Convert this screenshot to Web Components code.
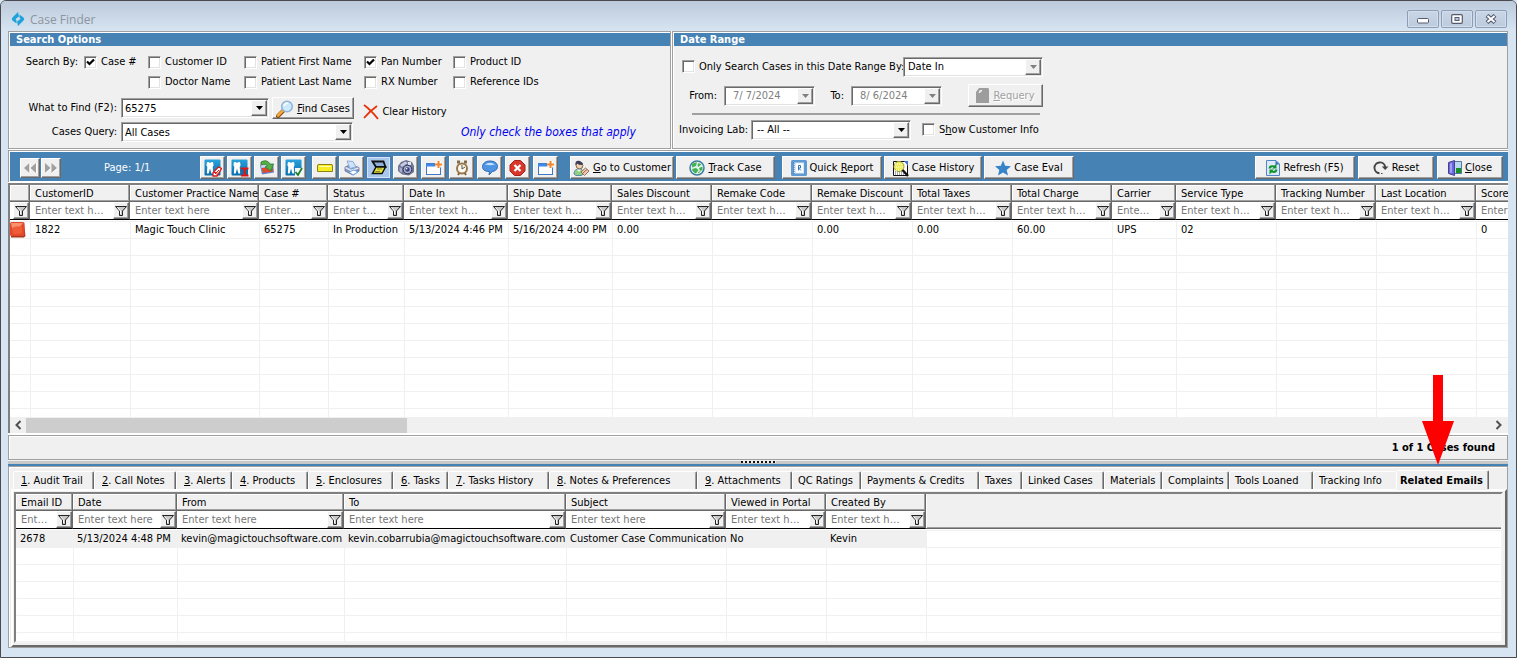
<!DOCTYPE html>
<html lang="en">
<head>
<meta charset="utf-8">
<title>Case Finder</title>
<style>
body{margin:0;font:11px/14px "DejaVu Sans Condensed","Noto Sans",sans-serif;color:#000;background:#d7e4f2}
</style>
</head>
<body>
<case-finder></case-finder>
<script>
const ICONS = {
logo:[14,14,'<path d="M7 0 1.500 5.500Q0 7 1.500 8.500L5.500 11.500V8.500L4.500 7 8 4.500ZM7 14 12.500 8.500Q14 7 12.500 5.500L8.500 2.500V5.500L9.500 7 6 9.500Z" fill="#1ea2dc"/>'],
find:[18,18,'<path d="M7 11 2 16" stroke="#8a4b12" stroke-width="4" stroke-linecap="round"/><path d="M7 10.500 2 15.500" stroke="#f5a93c" stroke-width="2.500" stroke-linecap="round"/><circle cx="11" cy="6.500" r="5.300" fill="#cdeafc" stroke="#8fb4d8" stroke-width="1.500"/><path d="M8 6a3 3 0 0 1 4-2.500" stroke="#fff" stroke-width="1.500" fill="none"/>'],
cross:[16,16,'<path d="M1 1Q8 6 15 15M14 2Q7 7 1 14" stroke="#e63206" stroke-width="1.800" fill="none"/>'],
funnel:[12,12,'<path d="M1 1.500H11L7.500 6V10H4.500V6Z" fill="#fff"/><path d="M.5 1.500H11.500L7.500 6V10.500H4.500V6Z" fill="#c8c8c8" stroke="#222"/><path d="M2.500 2.500 5.500 6V9" stroke="#fff" fill="none"/>'],
back:[14,12,'<path d="M6.500 1V11L1 6ZM13 1V11L7.500 6Z" fill="#a0a0a0"/><path d="M7 1V11M13.500 1V11" stroke="#fff"/>'],
fwd:[14,12,'<path d="M1 1V11L6.500 6ZM7.500 1V11L13 6Z" fill="#a0a0a0"/><path d="M1 11.500 7 6.500M7.500 11.500 13.500 6.500" stroke="#fff"/>'],
tooth:[18,18,'<defs><linearGradient id="g" x2="0" y2="1"><stop stop-color="#2aa3dc"/><stop offset="1" stop-color="#076cab"/></linearGradient></defs><rect x=".5" y=".5" width="16" height="16" rx="1" fill="url(#g)"/><path d="M3 3.200Q4.800 2.800 6 4Q7.300 2.800 9 3.200Q10.200 5.500 8.700 8L9.300 14.500H7.400L6 9.500 4.700 14.500H2.800L3.300 8Q1.800 5.500 3 3.200Z" fill="#fff"/>'],
pen:[18,18,'<path d="M2 6 4 15.500 16 13.500 15 4Z" fill="#5f87cf"/><path d="M3.500 8 5 14 15 12.500V10Z" fill="#e5472c"/><path d="M2.500 5.500 15 4 15.500 7 3.500 9Z" fill="#c5d6f3"/><path d="M3 3Q9-.5 12.500 5.500L15.500 5 13 12 7 8 9.500 7Q8 4 3 6Z" fill="#57b046" stroke="#2d7a26" stroke-width=".8"/>'],
yellow:[18,16,'<path d="M2 4.500H16L16.500 6V11.500H1.500V6Z" fill="#f8ec22" stroke="#8c8410"/><path d="M3 6.500H15" stroke="#fffcb8"/>'],
printer:[18,16,'<path d="M2 7 8 4.500 16 7.500V11L10 15 2 11Z" fill="#8496bd" stroke="#5f719a" stroke-width=".8"/><path d="M4 1 10 1.500 13 7 7 8.500Z" fill="#cfe2fb" stroke="#8badd9"/><path d="M2.500 7.500 8 10.500 15.500 8" stroke="#dbe4f5" stroke-width="1.500"/><path d="M6 12 11 10 15 12 10 15Z" fill="#fff" stroke="#4d94dd" stroke-width=".8"/>'],
scan:[18,18,'<path d="M2.500 2.500H13.500L15.500 8H6Z" fill="#8fb0dd" stroke="#111" stroke-width="1.800"/><path d="M15.500 8 12 14.500H2.500L6 8Z" fill="#e6e63c" stroke="#111" stroke-width="1.500"/><path d="M7 10H12M5.500 12.500H10" stroke="#85852c"/>'],
camera:[18,18,'<path d="M1 7 4 3 9 1 15 3 17 7V13L12 16.500 5 15.500 1 12Z" fill="#6d7594"/><path d="M3 6 8 2.500 11 4 5 8Z" fill="#c9cce0"/><path d="M11 3H14V6H11Z" fill="#e3e5ef"/><path d="M2.500 8 5 9.500V14L2.500 12Z" fill="#a8aecb"/><circle cx="10.500" cy="10.500" r="4.300" fill="#a9aecb" stroke="#2f365c"/><circle cx="10.500" cy="10.500" r="2.200" fill="#3a3f85"/><circle cx="9.700" cy="9.700" r=".8" fill="#fff"/>'],
win:[18,16,'<rect x="1.500" y="3.500" width="14" height="11" fill="#fff" stroke="#3e78c1"/><path d="M1 5H16" stroke="#3e8ae8" stroke-width="3"/><path d="M13.500 1V8M10 4.500H17" stroke="#fff" stroke-width="4"/><path d="M13.500 1V8M10 4.500H17" stroke="#f28524" stroke-width="2"/>'],
clock:[16,16,'<path d="M3 2H6M10 2H13" stroke="#806c49" stroke-width="3"/><path d="M4 15 6 12M12 15 10 12" stroke="#775f37" stroke-width="2"/><circle cx="8" cy="8.500" r="5" fill="#fffaf0" stroke="#987848" stroke-width="2"/><path d="M8 5V9L11 7" fill="none" stroke="#555"/>'],
chat:[18,16,'<path d="M9 1C13 1 16.500 3 16.500 6.500S13 11.500 11.500 11.500L8 15 8.500 11.500C3 11.500 1.500 9 1.500 6.500S4 1 9 1Z" fill="#4e94e2" stroke="#2f69b5"/><path d="M4 4.500Q9 1 14 4.500Q9 6 4 4.500Z" fill="#c3e2ff"/>'],
stop:[18,16,'<path d="M5.500.5H11.500L16 5V11L11.500 15.500H5.500L1 11V5Z" fill="#d8372b" stroke="#a82018"/><path d="M5.500 5 11.500 11M11.500 5 5.500 11" stroke="#fff" stroke-width="2.200"/>'],
person:[17,17,'<path d="M1 14Q1 9 6 9T11 14L8 15.500H3Z" fill="#8ed07f" stroke="#5a86a8"/><path d="M4 9.500 6 12 8 9.500" fill="#fff"/><circle cx="6.500" cy="5.500" r="3.400" fill="#f2cfa6" stroke="#5c4a42" stroke-width=".8"/><path d="M2.500 5.500Q1.500 0 7 1L9.500 3V5Q5.500 5 4 3.500Z" fill="#3c3b5a"/><path d="M8 12 12.500 8 16 11 11.500 15.500Z" fill="#ead3b2" stroke="#8f6f59"/><path d="M10 13 14 9.500" stroke="#bd5237"/>'],
globe:[16,16,'<circle cx="8" cy="8" r="7" fill="#e4f3ee" stroke="#3c7d9d" stroke-width="1.500"/><path d="M3 4Q5.500 2 8 2.500L7 6 3 7.500ZM9.500 3 12.500 4.500 9 7 8.500 5ZM10 8 13.500 6.500V10L11 11ZM3 9 7 8 9.500 10 7 13.500Q3.500 12 3 9ZM9 12 12 11 9.500 13.500Z" fill="#43b254"/>'],
report:[16,16,'<rect width="16" height="16" rx="1.500" fill="#5f9ad3"/><path d="M3 2.500H13V13.500H3Z" fill="#d8e8f7"/><path d="M3 3V14" stroke="#3c78b4" stroke-dasharray="1 1"/><path d="M5 3.500H12V12.500H5Z" fill="#fff"/><path d="M7.500 10.500V5.500H9.500V8H7.500L10 10.500" fill="none" stroke="#3877b7"/>'],
history:[17,17,'<path d="M1.500 1.500H15.500V15.500H1.500Z" fill="#fff" stroke="#111"/><path d="M3 12H10M3 14H12" stroke="#555" stroke-dasharray="1 1"/><circle cx="7" cy="6.500" r="5" fill="#eded56" stroke="#9c9b30"/><path d="M3 4H11M2 7H12M4 10H10" stroke="#fff" stroke-dasharray="1 1"/><path d="M10.500 10 16 16" stroke="#111" stroke-width="2.500"/><path d="M12 1H16V6Z" fill="#3c78c8"/>'],
star:[16,16,'<path d="M8 .5 10.200 5.800 16 6.300 11.700 10 13 15.500 8 12.500 3 15.500 4.300 10 0 6.300 5.800 5.800Z" fill="#3584c9"/>'],
refresh:[14,16,'<path d="M.5.5H10L13.500 4V15.500H.5Z" fill="#dce9fa" stroke="#5284c8"/><path d="M9.500.5V4.500H13.500Z" fill="#396fba"/><path d="M2.500 8.500Q3 4 8.500 5.500L10.500 3.500V8.500H6L7.500 7Q5 6.500 5 8.500Z" fill="#14922d"/><path d="M11.500 9.500Q11 14 5.500 12.500L3.500 14.500V9.500H8L6.500 11Q9 11.500 9 9.500Z" fill="#14922d"/>'],
reset:[16,14,'<path d="M6.500 12.200A5.400 5.400 0 1 1 12.200 6" fill="none" stroke="#454545" stroke-width="1.900"/><path d="M8 12.500H9.500" stroke="#454545"/><path d="M8.800 5.500H15.500L12.200 9Z" fill="#454545"/>'],
door:[14,16,'<path d="M6.500 1.500H13.500V13.500H6.500Z" fill="#b7d8ee" stroke="#54779e"/><path d="M8 8H13V13H8Z" fill="#168f26"/><path d="M.5 2.500 6.500.5V15.500L.5 13.500Z" fill="#6b65d6" stroke="#4640a0"/><path d="M2 3.500 4 3V13L2 12.500Z" fill="#a39ff1"/>'],
doc:[14,16,'<path d="M3 0H12Q13 0 13 2V15H0V4Z" fill="#9d9d9d"/><path d="M3.500 5Q3.500 2.500 6 2.500" fill="none" stroke="#f0f0f0" stroke-width="1.500"/>'],
cube:[16,16,'<path d="M1 1H14L15.500 14 14 15.500H1Z" fill="#a9361e"/><rect width="14.500" height="14" rx="1.500" fill="#e3492a"/><path d="M1 1H13L10 5 2 6Z" fill="#f79270"/><path d="M2 6Q7 3 12 5V11Q8 13 3 12Z" fill="#ef5d38"/>'],
down:[7,4,'<path d="M0 0H7L3.500 4Z" fill="currentColor"/>'],
left:[8,10,'<path d="M6.500 1 2.500 5 6.500 9" fill="none" stroke="#505050" stroke-width="2"/>'],
right:[8,10,'<path d="M1.500 1 5.500 5 1.500 9" fill="none" stroke="#505050" stroke-width="2"/>'],
min:[12,10,'<rect x=".5" y="4.500" width="11" height="4.500" rx="1" fill="#fff" stroke="#555b6e"/>'],
max:[12,10,'<rect x=".7" y=".7" width="10.600" height="8.600" rx="1" fill="#fff" stroke="#555b6e" stroke-width="1.200"/><rect x="4" y="3.500" width="4" height="3" fill="#b8c8dc" stroke="#555b6e"/>'],
close:[12,10,'<path d="M2 1.500 10 8.500M10 1.500 2 8.500" stroke="#555b6e" stroke-width="4.200"/><path d="M2.500 2 9.500 8M9.500 2 2.500 8" stroke="#fff" stroke-width="2"/>']
};
const T = ICONS.tooth[2];
ICONS.toothEdit=[18,18,T+'<path d="M9 13.500 14.500 8 17.500 9.500 13 17H9Z" fill="#fff" stroke="#d81818" stroke-width="1.300"/><path d="M11 15 15 11M10 13.500H13V16" stroke="#d81818"/>'];
ICONS.toothText=[18,18,T+'<path d="M9.500 9H17V16.500H9.500Z" fill="#0a70ad"/><path d="M10 9.500H17.500M13.700 9V16M10 16.500H17.500" stroke="#e31414" stroke-width="2.200"/>'];
ICONS.toothOk=[18,18,T+'<path d="M10 9H18V18H10Z" fill="#f4f8f4"/><path d="M10.500 13 13 16 17 9" fill="none" stroke="#167c24" stroke-width="1.700"/>'];

function define(name, css, html, after){
  customElements.define(name, class extends HTMLElement{
    connectedCallback(){
      if(this.shadowRoot) return;
      const root=this.attachShadow({mode:'open'});
      root.innerHTML='<style>*{box-sizing:border-box}'+css+'</style>'+(typeof html==='function'?html(this):html);
      if(after) after(this,root);
    }
  });
}
const SUNK='border:1px solid;border-color:#a0a0a0 #fff #fff #a0a0a0;box-shadow:inset 1px 1px #696969,inset -1px -1px #e3e3e3;';
const RAISED='background:#f0f0f0;border:1px solid;border-color:#fff #696969 #696969 #fff;box-shadow:inset -1px -1px #a0a0a0;';

define('ui-icon',':host{display:flex;flex:none}svg{display:block}',e=>{
  const [w,h,p]=ICONS[e.getAttribute('name')];
  return `<svg width="${w}" height="${h}" viewBox="0 0 ${w} ${h}" fill="none" aria-hidden="true">${p}</svg>`;
});

define('tool-button',`:host{display:flex;height:23px;width:var(--w,25px)}
button{flex:1;display:flex;align-items:center;justify-content:center;gap:3px;padding:1px 0 0;font:inherit;color:#000;white-space:nowrap;${RAISED}}
button:disabled{color:#a0a0a0;text-shadow:1px 1px #fff}
:host([pressed]) button{background:#a9c8ec;border-color:#4b7ab4;box-shadow:inset 0 0 0 1px #d6e6fa}
:host([flat]) button{border:0;box-shadow:none;background:none}`,
e=>`<button type="button" aria-label="${e.getAttribute('label')||''}" ${e.hasAttribute('disabled')?'disabled':''}>${e.hasAttribute('icon')?`<ui-icon name="${e.getAttribute('icon')}"></ui-icon>`:''}<span><slot></slot></span></button>`,
(e,r)=>{const b=r.querySelector('button'); if(!e.hasAttribute('label')) b.removeAttribute('aria-label'); else r.querySelector('span').remove();});

define('check-field',`:host{display:flex}
label{display:flex;align-items:center;gap:4px;white-space:nowrap}
input{appearance:none;margin:0;width:13px;height:13px;background:#fff;display:grid;place-items:center;${SUNK}}
input:checked{background:#fff url("data:image/svg+xml,%3Csvg xmlns='http://www.w3.org/2000/svg' width='11' height='11'%3E%3Cpath d='M2 4.500 4.500 7 9 2.500' fill='none' stroke='black' stroke-width='2.200'/%3E%3C/svg%3E") center no-repeat}`,
e=>`<label><input type="checkbox" ${e.hasAttribute('checked')?'checked':''}><span><slot></slot></span></label>`);

define('drop-field',`:host{display:flex;align-items:center}
label{width:var(--lw);padding-right:var(--lp,4px);text-align:right;white-space:nowrap}
.box{display:grid;grid-template-columns:1fr 16px;width:var(--w);height:20px;padding:1px;background:#fff;${SUNK}}
select,input{grid-area:1/1/2/3;appearance:none;min-width:0;width:100%;height:16px;margin:0;padding:0 18px 0 var(--tp,2px);border:0;outline:0;background:none;font:inherit;color:#000;opacity:1}
select{padding-top:1px}
.arrow{grid-area:1/2;display:grid;place-items:center;pointer-events:none;${RAISED}}
:host([off]) .arrow,:host([off]) input{color:#808080}`,
e=>{const v=e.getAttribute('value'),n=e.getAttribute('label'),k=e.getAttribute('kind');
 const field=k==='select'?`<select id="f" aria-label="${n}"><option>${v}</option></select>`:`<input id="f" type="text" aria-label="${n}" value="${v}" ${e.hasAttribute('off')?'disabled':''}>`;
 return (e.hasAttribute('nolabel')?'':`<label for="f">${n}</label>`)+`<div class="box">${field}<span class="arrow"><ui-icon name="down"></ui-icon></span></div>`;});

define('group-panel',`:host{display:block;background:#f0f0f0;border:1px solid #a0a0a0;box-shadow:inset 1px 1px #fff;padding:1px 0 6px 1px}
h2{margin:0;padding-left:6px;background:#4682b4;color:#fff;font:bold 11px/14px "DejaVu Sans Condensed","Noto Sans",sans-serif;height:13px}`,
e=>`<h2>${e.getAttribute('heading')}</h2><slot></slot>`);

define('search-options',`:host{display:block}
.checks{display:grid;grid-template-columns:74px 64px 96px 120px 89px auto;grid-auto-rows:20px;align-items:center;padding-top:6px}
.lead{text-align:right;padding-right:6px}
.row{display:flex;align-items:center;height:22px;margin-top:5px}
.row+.row{height:20px;margin-top:3px}
.row tool-button{height:22px;margin-left:3px}
.row tool-button[flat]{height:16px;align-self:flex-end}
em{color:#0000f0;font-size:12px;margin-left:108px;white-space:nowrap}`,
`<group-panel heading="Search Options"><div class="checks">
<span class="lead">Search By:</span><check-field checked>Case #</check-field><check-field>Customer ID</check-field><check-field>Patient First Name</check-field><check-field checked>Pan Number</check-field><check-field>Product ID</check-field>
<span></span><span></span><check-field>Doctor Name</check-field><check-field>Patient Last Name</check-field><check-field>RX Number</check-field><check-field>Reference IDs</check-field></div>
<div class="row"><drop-field label="What to Find (F2):" value="65275" style="--lw:111px;--w:148px"></drop-field><tool-button icon="find" style="--w:82px"><u>F</u>ind Cases</tool-button><tool-button flat icon="cross" style="--w:96px">Clear History</tool-button></div>
<div class="row"><drop-field kind="select" label="Cases Query:" value="All Cases" style="--lw:111px;--w:232px"></drop-field><em>Only check the boxes that apply</em></div></group-panel>`);

define('date-range',`:host{display:block}group-panel{height:100%}
.row{display:flex;align-items:center;height:21px}
.a{margin:10px 0 7px;padding-left:8px}.a check-field{width:221px}
.b{height:23px}.b tool-button{margin-left:26px}
hr{width:348px;height:2px;margin:6px 0 4px 18px;border:0;background:#a0a0a0}
.c check-field{margin-left:11px}`,
`<group-panel heading="Date Range"><div class="row a"><check-field>Only Search Cases in this Date Range By:</check-field><drop-field kind="select" nolabel label="Date field" value="Date In" off style="--w:140px;--tp:3px"></drop-field></div>
<div class="row b"><drop-field label="From:" value="7/ 7/2024" off style="--lw:50px;--lp:7px;--w:91px;--tp:7px"></drop-field><drop-field label="To:" value="8/ 6/2024" off style="--lw:36px;--lp:7px;--w:91px;--tp:7px"></drop-field><tool-button disabled icon="doc" style="--w:75px"><u>R</u>equery</tool-button></div>
<hr><div class="row c"><drop-field kind="select" label="Invoicing Lab:" value="-- All --" style="--lw:77px;--lp:3px;--w:160px;--tp:4px"></drop-field><check-field>S<u>h</u>ow Customer Info</check-field></div></group-panel>`);

define('tool-bar',`:host{display:flex;align-items:center;background:#4682b4;border:1px solid #a0a0a0;border-width:1px 0 0 1px;box-shadow:inset 1px 1px #fff,inset 0 -1px #fff;height:32px;padding:3px 5px 1px 11px}
div{display:flex;gap:2px}.nav{gap:1px}.nav tool-button{height:20px;--w:20px}
.page{color:#fff;width:139px;padding-left:43px}
.three{gap:3px}.m3{margin-left:3px}.m6{margin-left:6px}.m7{margin-left:7px}.m12{margin-left:12px}.end{margin-left:auto}`,
`<div class="nav"><tool-button icon="back" label="Previous page"></tool-button><tool-button icon="fwd" label="Next page"></tool-button></div><span class="page">Page: 1/1</span>
<div><tool-button icon="toothEdit" label="Edit case"></tool-button><tool-button icon="toothText" label="Case text"></tool-button><tool-button icon="pen" label="Exchange"></tool-button><tool-button icon="toothOk" label="Complete case"></tool-button></div>
<div class="m6"><tool-button icon="yellow" label="Label"></tool-button><tool-button icon="printer" label="Print"></tool-button><tool-button pressed icon="scan" label="Scan"></tool-button><tool-button icon="camera" label="Camera"></tool-button></div>
<div class="three m3"><tool-button icon="win" label="New task"></tool-button><tool-button icon="clock" label="Timer"></tool-button><tool-button icon="chat" label="Notes"></tool-button><tool-button icon="stop" label="Cancel"></tool-button><tool-button icon="win" label="New window"></tool-button></div>
<div class="m12"><tool-button icon="person" style="--w:104px"><u>G</u>o to Customer</tool-button><tool-button icon="globe" style="--w:99px"><u>T</u>rack Case</tool-button></div>
<div class="m7"><tool-button icon="report" style="--w:100px">Quick <u>R</u>eport</tool-button><tool-button icon="history" style="--w:98px">Case History</tool-button><tool-button icon="star" style="--w:90px">Case Eval</tool-button></div>
<div class="three end"><tool-button icon="refresh" style="--w:100px">Refresh (F5)</tool-button><tool-button icon="reset" style="--w:76px">Reset</tool-button><tool-button icon="door" style="--w:66px"><u>C</u>lose</tool-button></div>`);

const GRIDS={
cases:{cols:[['',20],['CustomerID',100],['Customer Practice Name',129],['Case #',69],['Status',76],['Date In',104],['Ship Date',104],['Sales Discount',100],['Remake Code',100],['Remake Discount',100],['Total Taxes',100],['Total Charge',100],['Carrier',64],['Service Type',100],['Tracking Number',100],['Last Location',100],['Score',100]],
 row:['<ui-icon name="cube"></ui-icon>','1822','Magic Touch Clinic','65275','In Production','5/13/2024 4:46 PM','5/16/2024 4:00 PM','0.00','','0.00','0.00','60.00','UPS','02','','','0'],blank:11},
emails:{cols:[['Email ID',57],['Date',104],['From',167],['To',222],['Subject',160],['Viewed in Portal',100],['Created By',100]],
 row:['2678','5/13/2024 4:48 PM','kevin@magictouchsoftware.com','kevin.cobarrubia@magictouchsoftware.com','Customer Case Communication','No','Kevin'],blank:6,fill:true}
};
define('data-grid',`:host{display:block;background:#fff;overflow:hidden;border:2px solid;border-color:#808080 #f4f4f4 #f4f4f4 #808080;min-height:0}
table{table-layout:fixed;border-collapse:separate;border-spacing:0;width:var(--tw)}
th,td{padding:0;font-weight:normal;text-align:left;white-space:nowrap}
.h th{height:17px;line-height:14px;padding:2px 0 0 5px;background:#f0f0f0;border:1px solid #696969;border-width:0 1px 1px 0;box-shadow:inset -1px -1px #a0a0a0,inset 1px 1px #fff}
.h .fill{box-shadow:inset 1px 0 #fff,inset 0 -1px #a0a0a0;border-right:0}
.f td{height:18px;border:1px solid #696969;border-width:0 1px 1px 0;border-bottom-color:#000;background:#fff}
.f div{display:flex;height:17px;justify-content:flex-end}
input{flex:1;min-width:0;width:0;border:0;outline:0;margin:0;padding:1px 8px 0 5px;font:inherit;background:none;text-overflow:ellipsis}
input::placeholder{color:#767676;opacity:1}
:host([name=emails]) input{padding-right:4px}
button{flex:none;width:16px;height:17px;padding:0;display:grid;place-items:center;${RAISED}}
.gap td{height:2px;border-bottom:1px solid #f0f0f0}
.r td{height:17px;line-height:16px;padding-left:4px;border:1px solid #f0f0f0;border-width:0 0 1px 1px}
.r td:first-child{border-left-color:transparent}
:host([name=cases]) .r td:first-child{padding:0;border-left:0}
:host([name=emails]) .r td{padding-left:3px}
:host([name=emails]) .sel td:not(.fill){background:#f0f0f0}`,
e=>{const g=GRIDS[e.getAttribute('name')];
 const sum=g.cols.reduce((a,c)=>a+c[1],0), fill=g.fill?1:0, n=g.cols.length+fill;
 return `<table style="--tw:${fill?'100%':sum+'px'}"><colgroup>${g.cols.map(c=>`<col style="width:${c[1]}px">`).join('')}${fill?'<col>':''}</colgroup>
<thead><tr class="h">${g.cols.map(c=>`<th scope="col">${c[0]}</th>`).join('')}${fill?'<th class="fill" rowspan="2"></th>':''}</tr>
<tr class="f">${g.cols.map(c=>`<td><div>${c[0]?`<input type="text" placeholder="Enter text here" aria-label="Filter ${c[0]}">`:''}<button type="button" aria-label="Filter options"><ui-icon name="funnel"></ui-icon></button></div></td>`).join('')}</tr></thead>
<tbody><tr class="gap"><td colspan="${n}"></td></tr><tr class="r sel">${g.row.map(t=>`<td>${t}</td>`).join('')}${fill?'<td class="fill"></td>':''}</tr>
${('<tr class="r">'+'<td></td>'.repeat(n)+'</tr>').repeat(g.blank)}</tbody></table>`;});

define('scroll-bar',`:host{display:flex;align-items:center;height:16px;padding:0 5px 0 4px;background:#f0f0f0;border-left:2px solid #808080}
i{flex:1;height:15px;margin:0 4px}i::before{content:"";display:block;width:26%;height:15px;background:#cdcdcd}`,
`<ui-icon name="left"></ui-icon><i></i><ui-icon name="right"></ui-icon>`);

define('tab-strip',`:host{display:flex;padding:4px 0 0 4px}
button{flex:none;height:18px;padding:1px 0 0 7px;border:1px solid;border-color:#fff #696969 transparent #fff;border-width:1px 1px 0 1px;border-radius:2px 2px 0 0;box-shadow:inset -1px 0 #a0a0a0;background:#f0f0f0;font:inherit;color:#000;text-align:left;white-space:nowrap}
button[aria-selected=true]{font-weight:bold;padding-left:3px;padding-top:2px;box-shadow:inset -1px 0 #a0a0a0,0 1px #f0f0f0;height:19px;margin:-1px 0 0}
button.last{border-right-color:transparent;box-shadow:none}`,
()=>[['1. Audit Trail',81],['2. Call Notes',82],['3. Alerts',56],['4. Products',76],['5. Enclosures',85],['6. Tasks',55],['7. Tasks History',101],['8. Notes &amp; Preferences',148],['9. Attachments',95],['QC Ratings',69],['Payments &amp; Credits',118],['Taxes',43],['Linked Cases',82],['Materials',58],['Complaints',67],['Tools Loaned',84],['Tracking Info',83],['Related Emails',93]]
.map(([t,w],i)=>`<button type="button" role="tab" aria-selected="${i===17}" class="${i===16?'last':''}" style="width:${w}px;${i>8&&i<17?'padding-left:5px':''}">${t.replace(/^(\d)/,'<u>$1</u>')}</button>`).join(''));

define('title-bar',`:host{display:flex;align-items:center;height:31px;padding:6px 9px 0 10px;background:linear-gradient(#bccadb,#d7e4f2)}
h1{margin:0 auto 0 5px;font:12px/16px "Open Sans",sans-serif;color:#8d949d;padding-top:2px}
div{display:flex;gap:2px}
button{width:32px;height:18px;padding:0;display:grid;place-items:center;background:linear-gradient(#c9d6e6,#bccbdd);border:1px solid #8d9db8;border-radius:2px;box-shadow:inset 0 0 0 1px #d3dfec}`,
`<ui-icon name="logo"></ui-icon><h1>Case Finder</h1><div><button type="button" aria-label="Minimize"><ui-icon name="min"></ui-icon></button><button type="button" aria-label="Maximize"><ui-icon name="max"></ui-icon></button><button type="button" aria-label="Close"><ui-icon name="close"></ui-icon></button></div>`);

define('status-line',`:host{display:flex;align-items:center;justify-content:flex-end;height:25px;padding-right:12px;background:#f0f0f0;border:1px solid #a0a0a0;box-shadow:inset 1px 1px #fff;font-weight:bold}`,'<slot></slot>');

define('split-bar',`:host{display:flex;flex-direction:column;align-items:center;height:6px;background:linear-gradient(#f0f0f0 1px,#c8c8c8 1px 4px,#4682b4 4px)}
i{width:35px;height:2px;margin-top:1px;background:repeating-linear-gradient(90deg,#111 0 2px,#eee 2px 4px)}`,'<i></i>');

define('case-finder',`:host{display:block}
.win{position:relative;display:flex;flex-direction:column;height:100vh;min-height:600px;border:1px solid #4a4a50;border-radius:6px 6px 0 0;background:#d7e4f2;overflow:hidden}
title-bar{height:30px}
main{flex:1;min-height:0;display:flex;flex-direction:column;margin:0 8px 9px 7px;background:#fff}
.top{display:grid;grid-template-columns:663fr 836fr;gap:1px;height:118px;margin-bottom:1px}
tool-bar{margin-bottom:1px}
.cases{flex:1;border-width:2px 0 0 2px}
status-line{margin-top:2px}
.low{background:#f0f0f0;border:1px solid #a0a0a0;box-shadow:inset 1px 1px #fff}
.page{padding:1px 2px 2px 1px;margin:0 0 0 2px;border:2px solid;border-color:#fff #696969 #696969 #fff}
.emails{height:151px}
.pointer{position:absolute;right:62px;bottom:192px;z-index:2}`,
`<div class="win"><title-bar></title-bar><main>
<div class="top"><search-options></search-options><date-range></date-range></div>
<tool-bar></tool-bar>
<data-grid class="cases" name="cases"></data-grid><scroll-bar></scroll-bar>
<status-line>1 of 1 Cases found</status-line><split-bar></split-bar>
<section class="low"><tab-strip role="tablist"></tab-strip><div class="page"><data-grid class="emails" name="emails"></data-grid></div></section>
</main><svg class="pointer" width="32" height="90" aria-hidden="true"><path d="M11 0H21V46H32L16 90 0 46H11Z" fill="#f00"/></svg></div>`);
</script>
</body>
</html>
